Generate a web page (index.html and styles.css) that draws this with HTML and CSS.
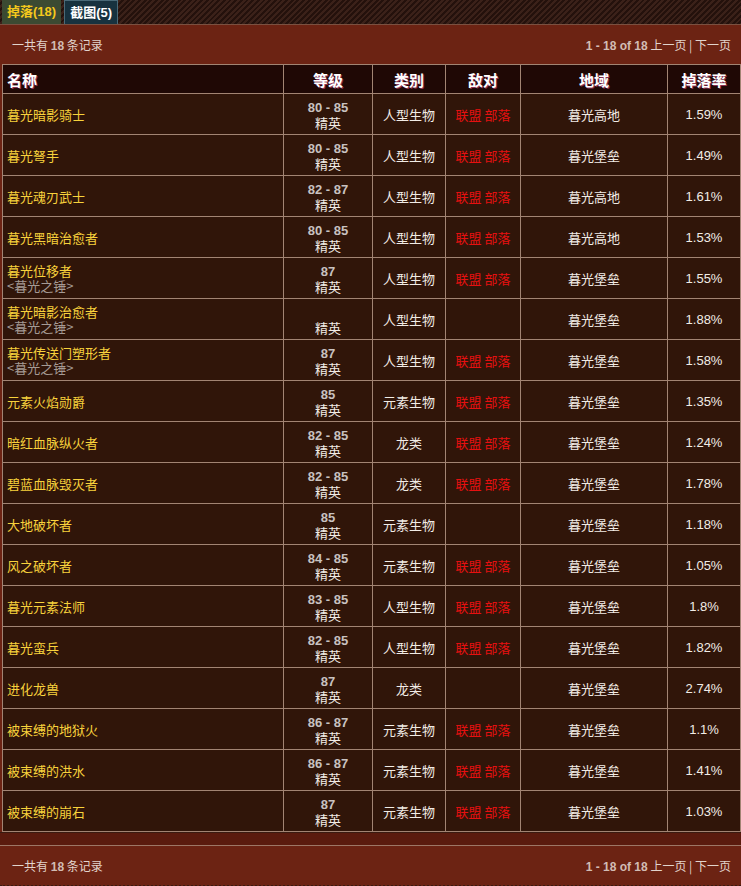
FILE: index.html
```html
<!DOCTYPE html>
<html lang="zh">
<head>
<meta charset="utf-8">
<title>掉落</title>
<link rel="stylesheet" href="styles.css">
</head>
<body>
<div class="page">
  <div class="tabs">
    <div class="tab tab-active">掉落(18)</div>
    <div class="tab tab-other">截图(5)</div>
  </div>
  <div class="bar">
    <span class="count">一共有 <b>18</b> 条记录</span>
    <span class="pager"><b>1 - 18 of 18</b> 上一页 | 下一页</span>
  </div>
  <div class="tablewrap">
  <table class="drops">
    <colgroup>
      <col class="c1"><col class="c2"><col class="c3"><col class="c4"><col class="c5"><col class="c6">
    </colgroup>
    <thead>
      <tr><th class="left">名称</th><th>等级</th><th>类别</th><th>敌对</th><th>地域</th><th>掉落率</th></tr>
    </thead>
    <tbody>
      <tr><td class="name">暮光暗影骑士</td><td class="lvl"><span class="num">80 - 85</span><br>精英</td><td>人型生物</td><td class="react">联盟 部落</td><td>暮光高地</td><td class="num">1.59%</td></tr>
      <tr><td class="name">暮光弩手</td><td class="lvl"><span class="num">80 - 85</span><br>精英</td><td>人型生物</td><td class="react">联盟 部落</td><td>暮光堡垒</td><td class="num">1.49%</td></tr>
      <tr><td class="name">暮光魂刃武士</td><td class="lvl"><span class="num">82 - 87</span><br>精英</td><td>人型生物</td><td class="react">联盟 部落</td><td>暮光高地</td><td class="num">1.61%</td></tr>
      <tr><td class="name">暮光黑暗治愈者</td><td class="lvl"><span class="num">80 - 85</span><br>精英</td><td>人型生物</td><td class="react">联盟 部落</td><td>暮光高地</td><td class="num">1.53%</td></tr>
      <tr><td class="name">暮光位移者<br><span class="sub">&lt;暮光之锤&gt;</span></td><td class="lvl"><span class="num">87</span><br>精英</td><td>人型生物</td><td class="react">联盟 部落</td><td>暮光堡垒</td><td class="num">1.55%</td></tr>
      <tr><td class="name">暮光暗影治愈者<br><span class="sub">&lt;暮光之锤&gt;</span></td><td class="lvl"><span class="num">&nbsp;</span><br>精英</td><td>人型生物</td><td class="react"></td><td>暮光堡垒</td><td class="num">1.88%</td></tr>
      <tr><td class="name">暮光传送门塑形者<br><span class="sub">&lt;暮光之锤&gt;</span></td><td class="lvl"><span class="num">87</span><br>精英</td><td>人型生物</td><td class="react">联盟 部落</td><td>暮光堡垒</td><td class="num">1.58%</td></tr>
      <tr><td class="name">元素火焰勋爵</td><td class="lvl"><span class="num">85</span><br>精英</td><td>元素生物</td><td class="react">联盟 部落</td><td>暮光堡垒</td><td class="num">1.35%</td></tr>
      <tr><td class="name">暗红血脉纵火者</td><td class="lvl"><span class="num">82 - 85</span><br>精英</td><td>龙类</td><td class="react">联盟 部落</td><td>暮光堡垒</td><td class="num">1.24%</td></tr>
      <tr><td class="name">碧蓝血脉毁灭者</td><td class="lvl"><span class="num">82 - 85</span><br>精英</td><td>龙类</td><td class="react">联盟 部落</td><td>暮光堡垒</td><td class="num">1.78%</td></tr>
      <tr><td class="name">大地破坏者</td><td class="lvl"><span class="num">85</span><br>精英</td><td>元素生物</td><td class="react"></td><td>暮光堡垒</td><td class="num">1.18%</td></tr>
      <tr><td class="name">风之破坏者</td><td class="lvl"><span class="num">84 - 85</span><br>精英</td><td>元素生物</td><td class="react">联盟 部落</td><td>暮光堡垒</td><td class="num">1.05%</td></tr>
      <tr><td class="name">暮光元素法师</td><td class="lvl"><span class="num">83 - 85</span><br>精英</td><td>人型生物</td><td class="react">联盟 部落</td><td>暮光堡垒</td><td class="num">1.8%</td></tr>
      <tr><td class="name">暮光蛮兵</td><td class="lvl"><span class="num">82 - 85</span><br>精英</td><td>人型生物</td><td class="react">联盟 部落</td><td>暮光堡垒</td><td class="num">1.82%</td></tr>
      <tr><td class="name">进化龙兽</td><td class="lvl"><span class="num">87</span><br>精英</td><td>龙类</td><td class="react"></td><td>暮光堡垒</td><td class="num">2.74%</td></tr>
      <tr><td class="name">被束缚的地狱火</td><td class="lvl"><span class="num">86 - 87</span><br>精英</td><td>元素生物</td><td class="react">联盟 部落</td><td>暮光堡垒</td><td class="num">1.1%</td></tr>
      <tr><td class="name">被束缚的洪水</td><td class="lvl"><span class="num">86 - 87</span><br>精英</td><td>元素生物</td><td class="react">联盟 部落</td><td>暮光堡垒</td><td class="num">1.41%</td></tr>
      <tr><td class="name">被束缚的崩石</td><td class="lvl"><span class="num">87</span><br>精英</td><td>元素生物</td><td class="react">联盟 部落</td><td>暮光堡垒</td><td class="num">1.03%</td></tr>
    </tbody>
  </table>
  </div>
  <div class="band"></div>
  <div class="bar bar-bottom">
    <span class="count">一共有 <b>18</b> 条记录</span>
    <span class="pager"><b>1 - 18 of 18</b> 上一页 | 下一页</span>
  </div>
</div>
</body>
</html>
```
FILE: styles.css
```css
html, body {
  margin: 0;
  padding: 0;
  background: #2a120b;
}
body {
  font-family: "Noto Sans CJK SC", "Liberation Sans", sans-serif;
  font-size: 12px;
  color: #e8e0d8;
}
.page {
  width: 741px;
  height: 886px;
  overflow: hidden;
}
.tabs {
  height: 24px;
  display: flex;
  gap: 3px;
  padding-left: 2px;
  background: repeating-linear-gradient(135deg, #3b2119 0 2px, #24110c 2px 4px);
  border-bottom: 1px solid #7a5040;
}
.tab {
  height: 24px;
  line-height: 24px;
  padding: 0 5px;
  font-size: 13px;
  font-weight: bold;
  white-space: nowrap;
  font-family: "Liberation Sans", "Noto Sans CJK SC", sans-serif;
}
.tab-active {
  background: #3b4a32;
  color: #f4c81c;
}
.tab-other {
  background: #17323f;
  color: #ffffff;
  border: 1px solid #4a6a78;
  border-bottom: none;
  height: 23px;
  line-height: 23px;
}
.bar {
  height: 39px;
  background: #6c2313;
  display: flex;
  justify-content: space-between;
  align-items: center;
  padding: 0 10px 0 12px;
  color: #e2d4cc;
  font-size: 12px;
}
.bar b {
  font-family: "Liberation Sans", sans-serif;
  color: #d2bcb4;
}
.bar-bottom {
  border-top: 1px solid #9d7766;
  border-bottom: 2px dotted #3a1a10;
}
.tablewrap {
  padding-left: 2px;
  background: #6c2313;
}
.drops {
  border-collapse: collapse;
  width: 739px;
  table-layout: fixed;
  background: #301509;
}
.c1 { width: 281px; }
.c2 { width: 89px; }
.c3 { width: 73px; }
.c4 { width: 75px; }
.c5 { width: 147px; }
.c6 { width: 73px; }
.drops th, .drops td {
  border: 1px solid #a28473;
  text-align: center;
  vertical-align: middle;
  padding: 0 4px;
}
.drops th {
  background: #1f0805;
  height: 28px;
  color: #ffffff;
  font-size: 15px;
  font-weight: bold;
  text-shadow: 1px 1px 0 #8a3050;
}
.drops th.left { text-align: left; }
.drops td {
  height: 40px;
  line-height: 15px;
  font-size: 13px;
  color: #f2ece6;
}
.drops td.name {
  text-align: left;
  color: #f8d23c;
}
.sub {
  color: #a59a94;
}
.num {
  font-family: "Liberation Sans", sans-serif;
  color: #d8d0cc;
  font-size: 13px;
}
.lvl .num { font-weight: bold; color: #c8c2c0; }
.react { color: #e61010 !important; }
.band {
  height: 12px;
  background: #5a1b0e;
  border-top: 1px solid #3a1a10;
}
```
